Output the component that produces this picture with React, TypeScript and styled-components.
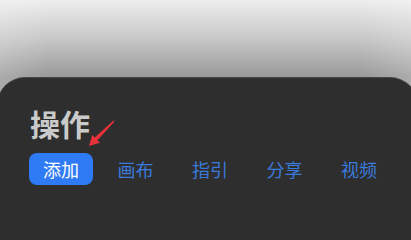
import styled, { createGlobalStyle } from "styled-components";

const GlobalStyle = createGlobalStyle`
  html, body {
    margin: 0;
    padding: 0;
    height: 215px;
    overflow: hidden;
    background: #2e2e2e;
    font-family: "Noto Sans CJK SC", "Noto Sans", sans-serif;
  }
`;

const Page = styled.div`
  height: 215px;
  padding-top: 77px;
  box-sizing: border-box;
  overflow: hidden;
  background:
    linear-gradient(
      to right,
      rgba(255, 255, 255, 0.18),
      rgba(255, 255, 255, 0) 12%,
      rgba(255, 255, 255, 0) 88%,
      rgba(255, 255, 255, 0.18)
    ),
    linear-gradient(to bottom, #eeeeee 0, #c6c6c6 40px, #999999 77px);
`;

const Panel = styled.section`
  margin: 0 -7px 0 -3px;
  height: 138px;
  padding: 31px 0 0 32px;
  box-sizing: border-box;
  background: #2e2e2e;
  border-radius: 28px 28px 0 0;
  box-shadow: inset 0 1px 0 rgba(255, 255, 255, 0.12);
`;

const TitleRow = styled.div`
  position: relative;
  height: 45px;
`;

const Title = styled.h2`
  margin: 0 0 0 1px;
  font-size: 30px;
  line-height: 31px;
  font-weight: 700;
  color: #cacaca;
`;

const Pointer = styled.svg`
  position: absolute;
  left: 58px;
  top: 11px;
`;

const Tabs = styled.nav`
  display: flex;
  gap: 10.5px;
`;

const Tab = styled.div<{ $active?: boolean }>`
  width: 64px;
  height: 32px;
  display: flex;
  align-items: center;
  justify-content: center;
  border-radius: 8px;
  font-size: 18px;
  color: ${(p) => (p.$active ? "#ffffff" : "#3a7adb")};
  background: ${(p) => (p.$active ? "#2f7bf5" : "transparent")};
`;

const tabs = ["添加", "画布", "指引", "分享", "视频"];

const App = () => {
  return (
    <>
      <GlobalStyle />
      <Page>
        <Panel>
          <TitleRow>
            <Title>操作</Title>
            <Pointer width="30" height="30" viewBox="0 0 30 30">
              <polygon
                points="2,27 13,23.8 10.4,21.2 27.5,2.5 26.5,1.5 7.8,18.6 5.2,16"
                fill="#e8323a"
              />
            </Pointer>
          </TitleRow>
          <Tabs>
            {tabs.map((t, i) => (
              <Tab key={t} $active={i === 0}>
                {t}
              </Tab>
            ))}
          </Tabs>
        </Panel>
      </Page>
    </>
  );
};

export default App;
